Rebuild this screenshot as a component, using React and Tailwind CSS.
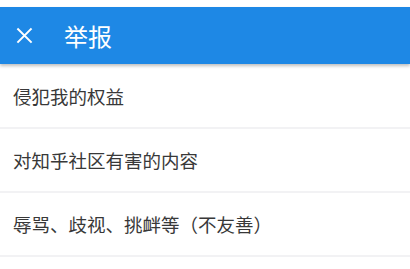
import React from 'react';

const reasons = ['侵犯我的权益', '对知乎社区有害的内容', '辱骂、歧视、挑衅等（不友善）'];

const App = () => {
    return (
        <div className="w-[410px] h-[269px] overflow-hidden bg-white" style={{ fontFamily: '"Noto Sans CJK SC", "Noto Sans", sans-serif' }}>
            <div className="h-[7px] bg-white" />
            <div className="relative z-10 h-[57px] bg-[#1e88e5] flex items-center shadow-[0_2px_3px_rgba(0,0,0,0.25)]">
                <svg className="ml-[16px] w-[17px] h-[17px]" viewBox="0 0 16 16" fill="none" stroke="#ffffff" strokeWidth="1.9" strokeLinecap="square">
                    <path d="M2 2L14 14M14 2L2 14" />
                </svg>
                <span className="ml-[31px] text-[24px] leading-none text-white">举报</span>
            </div>
            <div className="flex flex-col">
                {reasons.map((r, i) => (
                    <div key={i} className="h-[64px] flex items-center px-[13px] border-b-2 border-[#f2f2f4] first:h-[65px] first:pt-[2px]">
                        <span className="text-[18.5px] text-[#383838] leading-none">{r}</span>
                    </div>
                ))}
            </div>
        </div>
    );
};

export default App;
